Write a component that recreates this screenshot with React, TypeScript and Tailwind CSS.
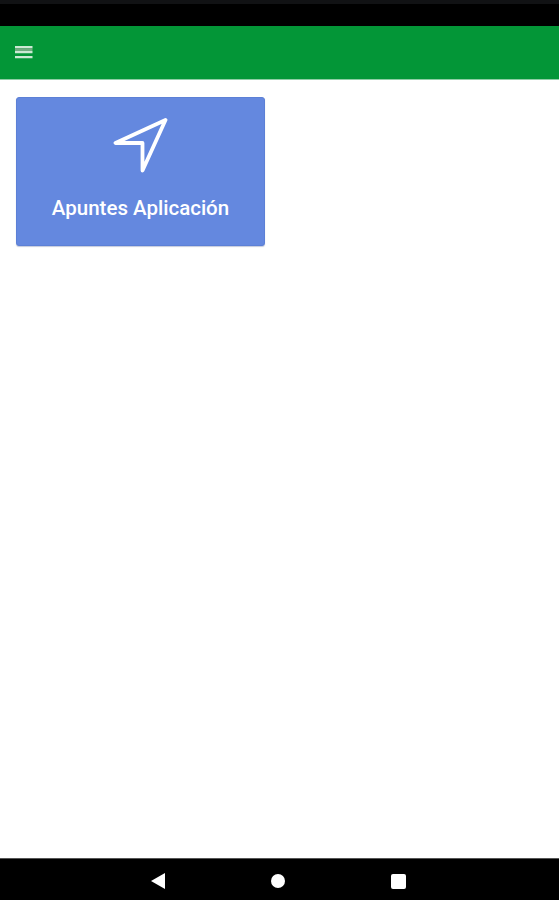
import { FC, ReactNode } from 'react'

interface INavButton {
  label: string
  children: ReactNode
}

const NavButton: FC<INavButton> = ({ label, children }) => (
  <button aria-label={label} className="flex w-[120px] items-center justify-center">
    {children}
  </button>
)

const Header: FC = () => (
  <header className="flex h-[54px] items-center border-b border-[#8fcda5] bg-[#039637] pl-[14.5px]">
    <button aria-label="Menu">
      <svg width="18" height="13" viewBox="0 0 18 13" className="block">
        <path d="M0 0h17.5v2.2H0zM0 5h17.5v2.2H0zM0 10h17.5v2.2H0z" fill="#cbe9d3" />
        <path d="M0 2.2h17.5v2.8H0z" fill="#6fab7f" />
      </svg>
    </button>
  </header>
)

const Card: FC = () => (
  <button className="flex h-[149px] w-[249px] flex-col items-center rounded-[3px] border border-[#5c80d6] bg-[#6488df] pt-[19px] text-white shadow-[0_1px_1px_rgba(60,80,140,0.3)]">
    <svg
      width="56"
      height="56"
      viewBox="0 0 56 56"
      fill="none"
      stroke="currentColor"
      strokeWidth="3.8"
      strokeLinejoin="round"
    >
      <path d="M52.5 3 2.5 26H29.5V53.5Z" />
    </svg>
    <span className="mt-[20px] text-[20.5px] leading-[30px] font-medium whitespace-nowrap">Apuntes Aplicación</span>
  </button>
)

const App: FC = () => {
  return (
    <div className="flex h-[900px] w-[559px] flex-col overflow-hidden bg-white font-[Roboto,sans-serif]">
      <div className="h-[26px] shrink-0 border-t-4 border-[#111214] bg-black" />
      <Header />
      <main className="flex-auto px-4 pt-[17px]">
        <Card />
      </main>
      <nav className="flex h-[42px] shrink-0 justify-center border-t border-[#555] bg-black pt-[3px] pr-[3px] text-white">
        <NavButton label="Back">
          <svg width="14" height="16" viewBox="0 0 14 16" fill="currentColor">
            <path d="M14 0V16L0 8Z" />
          </svg>
        </NavButton>
        <NavButton label="Home">
          <span className="size-[14px] rounded-full bg-white" />
        </NavButton>
        <NavButton label="Recents">
          <span className="size-[15px] rounded-[2px] bg-white" />
        </NavButton>
      </nav>
    </div>
  )
}

export default App
